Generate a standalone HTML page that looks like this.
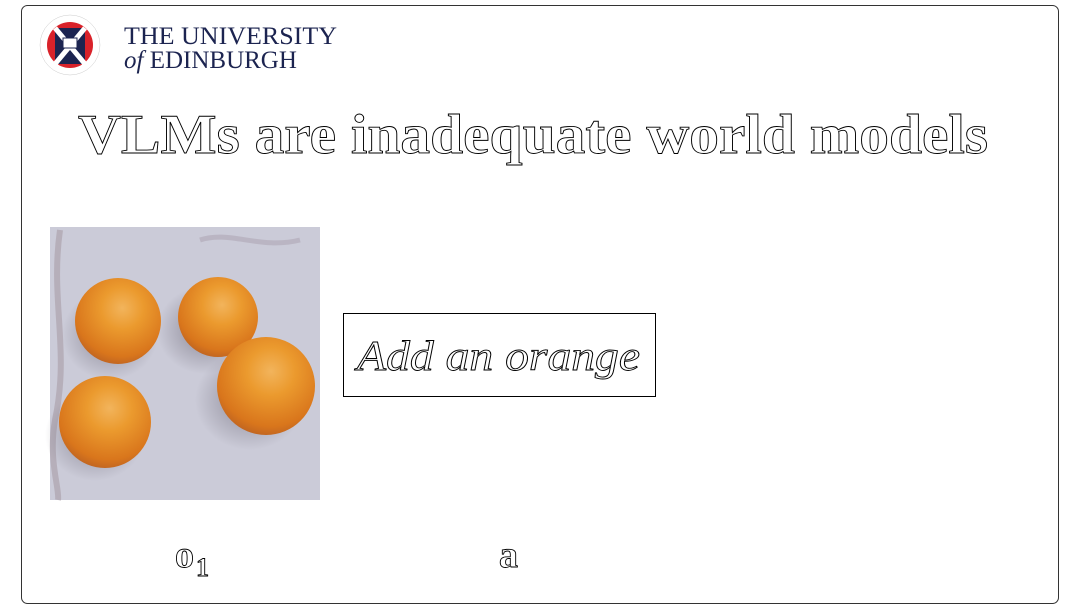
<!DOCTYPE html>
<html><head><meta charset="utf-8"><style>
html,body{margin:0;padding:0;background:#fff;width:1080px;height:608px;overflow:hidden}
svg{display:block}
.o{fill:#fff;stroke:#000;stroke-width:0.9}
</style></head><body>
<svg width="1080" height="608" viewBox="0 0 1080 608">
<defs>
<radialGradient id="og" cx="0.55" cy="0.35" r="0.7">
<stop offset="0" stop-color="#f2b45c"/><stop offset="0.35" stop-color="#eb9a2e"/><stop offset="0.8" stop-color="#d9761c"/><stop offset="1" stop-color="#b85f22"/>
</radialGradient>
<radialGradient id="sh" cx="0.5" cy="0.5" r="0.5">
<stop offset="0" stop-color="#6e6a78" stop-opacity="0.7"/><stop offset="1" stop-color="#6e6a78" stop-opacity="0"/>
</radialGradient>
</defs>
<rect x="21.5" y="5.5" width="1037" height="598" rx="6" fill="none" stroke="#333" stroke-width="1"/>
<circle cx="70" cy="45" r="30" fill="#fff" stroke="#ccc" stroke-width="0.5"/>
<circle cx="70" cy="45" r="23" fill="#d9222a"/>
<rect x="55" y="28" width="30" height="36" fill="#1c2450"/>
<path d="M55 28L85 64M85 28L55 64" stroke="#fff" stroke-width="5"/>
<rect x="63" y="38" width="14" height="10" fill="#fff" stroke="#1c2450" stroke-width="1"/>
<text x="124" y="44" font-family="Liberation Serif,serif" font-size="25" fill="#1c2450" textLength="213" lengthAdjust="spacingAndGlyphs">THE UNIVERSITY</text>
<text x="124" y="68" font-family="Liberation Serif,serif" font-size="25" fill="#1c2450"><tspan font-style="italic">of</tspan> EDINBURGH</text>
<text class="o" x="78" y="153" font-family="Liberation Serif,serif" font-weight="bold" font-size="56" textLength="910" lengthAdjust="spacingAndGlyphs">VLMs are inadequate world models</text>
<rect x="50" y="227" width="270" height="273" fill="#cbcbd8"/>
<path d="M60 230 C50 300 70 350 55 420 C48 460 60 490 58 500" stroke="#a99ca6" stroke-width="6" fill="none" opacity="0.6"/>
<path d="M200 240 C230 230 260 250 300 240" stroke="#aaa0ad" stroke-width="5" fill="none" opacity="0.5"/>
<ellipse cx="110" cy="335" rx="48" ry="45" fill="url(#sh)"/>
<ellipse cx="205" cy="330" rx="48" ry="44" fill="url(#sh)"/>
<ellipse cx="250" cy="400" rx="55" ry="50" fill="url(#sh)"/>
<ellipse cx="95" cy="435" rx="50" ry="46" fill="url(#sh)"/>
<circle cx="118" cy="321" r="43" fill="url(#og)"/>
<circle cx="218" cy="317" r="40" fill="url(#og)"/>
<circle cx="266" cy="386" r="49" fill="url(#og)"/>
<circle cx="105" cy="422" r="46" fill="url(#og)"/>
<rect x="343.5" y="313.5" width="312" height="83" fill="#fff" stroke="#000" stroke-width="1"/>
<text class="o" x="357" y="370" font-family="Liberation Serif,serif" font-style="italic" font-size="42" textLength="283" lengthAdjust="spacingAndGlyphs">Add an orange</text>
<text class="o" x="175" y="567" font-family="Liberation Serif,serif" font-weight="bold" font-size="38">o</text>
<text class="o" x="196" y="576" font-family="Liberation Serif,serif" font-weight="bold" font-size="26">1</text>
<text class="o" x="499" y="567" font-family="Liberation Serif,serif" font-weight="bold" font-size="38">a</text>
</svg>
</body></html>
